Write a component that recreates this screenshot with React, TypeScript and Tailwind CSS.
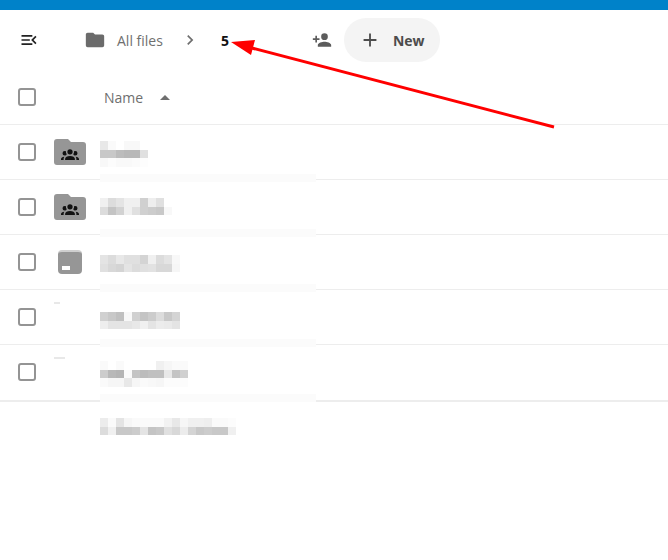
const FOLDER = 'M10,4H4C2.89,4 2,4.89 2,6V18A2,2 0 0,0 4,20H20A2,2 0 0,0 22,18V8C22,6.89 21.1,6 20,6H12L10,4Z';
const GROUP =
  'M12,5.5A3.5,3.5 0 0,1 15.5,9A3.5,3.5 0 0,1 12,12.5A3.5,3.5 0 0,1 8.5,9A3.5,3.5 0 0,1 12,5.5M5,8C5.56,8 6.08,8.15 6.53,8.42C6.38,9.85 6.8,11.27 7.66,12.38C7.16,13.34 6.16,14 5,14A3,3 0 0,1 2,11A3,3 0 0,1 5,8M19,8A3,3 0 0,1 22,11A3,3 0 0,1 19,14C17.84,14 16.84,13.34 16.34,12.38C17.2,11.27 17.62,9.85 17.47,8.42C17.92,8.15 18.44,8 19,8M5.5,18.25C5.5,16.18 8.41,14.5 12,14.5C15.59,14.5 18.5,16.18 18.5,18.25V20H5.5V18.25M0,20V18.5C0,17.11 1.89,15.94 4.45,15.6C3.86,16.28 3.5,17.22 3.5,18.25V20H0M24,20H20.5V18.25C20.5,17.22 20.14,16.28 19.55,15.6C22.11,15.94 24,17.11 24,18.5V20Z';

// blurred file names: cell grey values per mosaic line
const ROWS = [
  {
    top: 16,
    lines: [
      ['e8', 'fa', 'ff', 'f8', 'f8', 'ff'],
      ['c8', 'c8', 'bc', 'b8', 'b8', 'e0'],
      ['f8', 'fc', 'f9', 'f9', 'fb', 'fd'],
    ],
  },
  {
    top: 18,
    lines: [
      ['f0', 'dc', 'e4', 'f0', 'f0', 'd0', 'ee', 'e0', 'ff'],
      ['dc', 'c4', 'd2', 'f0', 'e0', 'd0', 'cc', 'c8', 'f8'],
    ],
  },
  {
    top: 20,
    lines: [
      ['e4', 'dc', 'e8', 'e0', 'e0', 'd4', 'f0', 'dc', 'e4', 'f8'],
      ['e0', 'd8', 'd4', 'e4', 'dc', 'e0', 'e2', 'd8', 'd8', 'f6'],
    ],
  },
  {
    top: 22,
    lines: [
      ['d0', 'c8', 'c0', 'f8', 'd0', 'c4', 'cc', 'dc', 'c8', 'd4'],
      ['ee', 'e4', 'e4', 'e4', 'e8', 'f0', 'e4', 'ec', 'ea', 'e4'],
    ],
  },
  {
    top: 16,
    lines: [
      ['fa', 'ff', 'fa', 'ff', 'ff', 'ff', 'ff', 'f0', 'f6', 'fa', 'fa'],
      ['cc', 'b8', 'b4', 'fa', 'c4', 'bc', 'c0', 'c0', 'e8', 'c4', 'd0'],
      ['fa', 'f6', 'f6', 'e8', 'f6', 'fa', 'f8', 'f6', 'fc', 'fc', 'fc'],
    ],
  },
  {
    top: 16,
    lines: [
      ['ec', 'fa', 'e4', 'f6', 'fa', 'fa', 'fa', 'fa', 'f2', 'e8', 'f6', 'f0', 'f0', 'ee', 'fa', 'fa', 'fc'],
      ['dc', 'f0', 'c8', 'c8', 'cc', 'e4', 'c4', 'c8', 'e0', 'd8', 'ec', 'd4', 'c8', 'cc', 'c8', 'c8', 'f0'],
    ],
  },
];

function Mosaic({ lines }: { lines: string[][] }) {
  return (
    <div className="flex flex-col">
      {lines.map((line, i) => (
        <div key={i} className="flex h-[8.5px]">
          {line.map((v, j) => (
            <div key={j} className="w-[8px] h-full" style={{ background: `#${v}${v}${v}` }} />
          ))}
        </div>
      ))}
    </div>
  );
}

function Checkbox() {
  return <div className="w-[18px] h-[18px] rounded-[3px] border-2 border-[#949494] bg-white" />;
}

function Icon({ d, className }: { d: string; className: string }) {
  return (
    <svg viewBox="0 0 24 24" className={className} fill="currentColor">
      <path d={d} />
    </svg>
  );
}

function FileIcon({ index }: { index: number }) {
  if (index < 2) {
    return (
      <div className="relative w-[32px] h-[26px]">
        <svg viewBox="0 0 32 26" className="w-[32px] h-[26px] text-[#969696]" fill="currentColor">
          <path d="M3 0H14L17 3H29C31 3 32 4 32 6V23C32 25 31 26 29 26H3C1 26 0 25 0 23V3C0 1 1 0 3 0Z" />
        </svg>
        <Icon d={GROUP} className="absolute left-[7px] top-[6px] w-[18px] h-[18px] text-[#111]" />
      </div>
    );
  }
  if (index === 2) {
    return (
      <div className="w-[24px] h-[24px] rounded-[4px] bg-[#969696] border-t-2 border-[#cfcfcf] flex items-end pl-[4px] pb-[4px]">
        <div className="w-[8px] h-[4px] bg-white" />
      </div>
    );
  }
  return (
    <div className="w-[32px] h-[30px]">
      <div className={`h-[2px] bg-[#e8e8e8] ${index === 3 ? 'w-[6px]' : 'w-[11px]'}`} />
    </div>
  );
}

export default function App() {
  return (
    <div className="relative w-[668px] h-[560px] bg-white overflow-hidden font-['Open_Sans','Noto_Sans',sans-serif] text-[14px] text-[#6f6f6f]">
      <div className="h-[10px] bg-[#0082c9]" />

      <div className="flex items-center h-[60px]">
        <Icon
          d="M21,15.61L19.59,17L14.58,12L19.59,7L21,8.39L17.44,12L21,15.61M3,6H16V8H3V6M3,13V11H13V13H3M3,18V16H16V18H3Z"
          className="ml-[19px] w-[20px] h-[20px] text-[#222]"
        />
        <Icon d={FOLDER} className="ml-[45px] w-[22px] h-[22px] text-[#6b6b6b]" />
        <span className="ml-[11px]">All files</span>
        <Icon
          d="M8.59,16.58L13.17,12L8.59,7.41L10,6L16,12L10,18L8.59,16.58Z"
          className="ml-[17px] w-[20px] h-[20px] text-[#6f6f6f]"
        />
        <span className="ml-[21px] font-bold text-[#111]">5</span>
        <Icon
          d="M15,14C12.33,14 7,15.33 7,18V20H23V18C23,15.33 17.67,14 15,14M6,10V7H4V10H1V12H4V15H6V12H9V10M15,12A4,4 0 0,0 19,8A4,4 0 0,0 15,4A4,4 0 0,0 11,8A4,4 0 0,0 15,12Z"
          className="ml-[83px] w-[20px] h-[20px] text-[#5c5c5c]"
        />
        <div className="ml-[12px] flex items-center w-[96px] h-[44px] rounded-full bg-[#f4f4f4]">
          <Icon d="M19,13H13V19H11V13H5V11H11V5H13V11H19V13Z" className="ml-[15px] w-[22px] h-[22px] text-[#4c4c4c]" />
          <span className="ml-[12px] font-bold text-[#4c4c4c]">New</span>
        </div>
      </div>

      <div className="flex items-center h-[55px] border-b border-[#ededed] pl-[18px]">
        <Checkbox />
        <span className="ml-[68px] text-[#6f6f6f]">Name</span>
        <Icon d="M7,15L12,10L17,15H7Z" className="ml-[10px] w-[24px] h-[24px] text-[#6f6f6f]" />
      </div>

      {ROWS.slice(0, 5).map((row, i) => (
        <div
          key={i}
          className={`relative flex pl-[18px] items-center border-[#ededed] ${
            i === 4 ? 'h-[57px] border-b-2 pb-[1px]' : 'h-[55px] border-b'
          }`}
        >
          <Checkbox />
          <div className="ml-[18px] w-[32px] flex justify-center">
            <FileIcon index={i} />
          </div>
          {i > 0 && <div className="absolute left-[100px] top-[-6px] w-[216px] h-[8px] bg-[#fbfbfb]" />}
          <div className="absolute left-[100px]" style={{ top: row.top }}>
            <Mosaic lines={row.lines} />
          </div>
        </div>
      ))}

      <div className="relative h-[60px]">
        <div className="absolute left-[100px] top-[-8px] w-[216px] h-[8px] bg-[#fbfbfb]" />
        <div className="absolute left-[100px] top-[16px]">
          <Mosaic lines={ROWS[5].lines} />
        </div>
      </div>

      <svg className="absolute left-0 top-0 w-[668px] h-[560px] pointer-events-none" viewBox="0 0 668 560">
        <line x1="554" y1="127" x2="248" y2="47" stroke="#ff0000" strokeWidth="3" />
        <polygon points="231,42 255,40 251,55" fill="#ff0000" />
      </svg>
    </div>
  );
}
